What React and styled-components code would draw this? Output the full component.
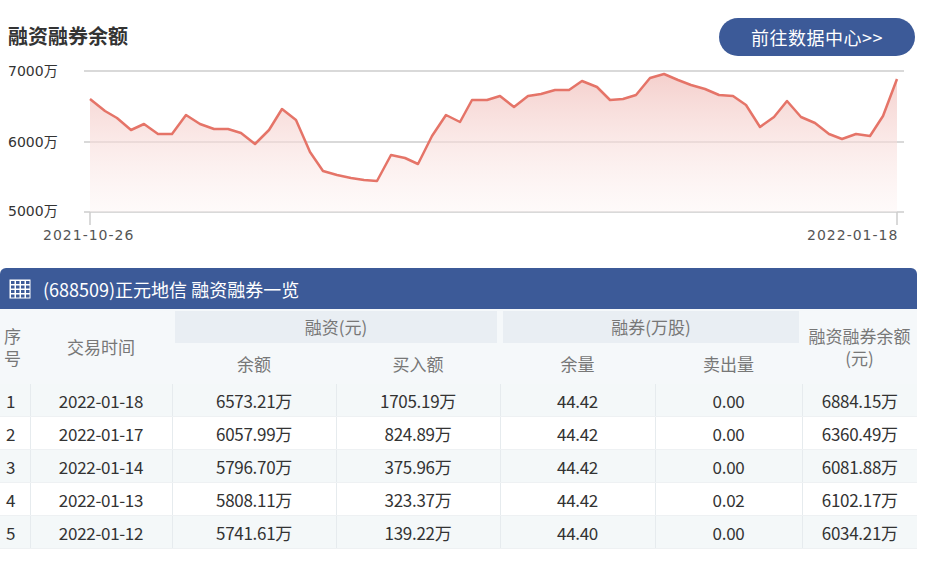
import React from "react";
import styled, { createGlobalStyle } from "styled-components";

const Global = createGlobalStyle`
  body { margin: 0; background: #fff; font-family: "Noto Sans CJK SC", "Noto Sans", sans-serif; }
`;

const Page = styled.div` width: 917px; `;
const TitleRow = styled.div`
  display: flex; justify-content: space-between; align-items: center;
  height: 40px; margin-top: 17px; padding-left: 8px;
`;
const Title = styled.h1` margin: 0 0 4px; font-size: 20px; font-weight: bold; color: #333; `;
const GoButton = styled.a`
  display: flex; align-items: center; justify-content: center;
  width: 196px; height: 38px; border-radius: 19px; background: #3c5a98;
  color: #fff; font-size: 18px; letter-spacing: 0.5px; margin-right: 2px;
`;
const Chart = styled.svg` display: block; `;
const Bar = styled.div`
  margin-top: 6px; height: 41px; background: #3c5a98; color: #fff;
  border-radius: 6px 6px 0 0; display: flex; align-items: center; gap: 12px;
  padding-left: 9px; font-size: 18px;
`;
const Table = styled.table`
  width: 917px; border-collapse: collapse; table-layout: fixed; font-size: 17px;
`;
const Th = styled.th`
  font-weight: normal; color: #777; background: #f5f8fa; height: ${p => p.h || 34}px; padding: 0;
  line-height: 22px; vertical-align: middle; font-size: 17px;
`;
const Band = styled.div`
  background: #e9eef3; height: 32px; margin: 2px 3px 0; display: flex; align-items: center; justify-content: center;
`;
const Tr = styled.tr` background: ${p => (p.odd ? "#f4f8f9" : "#fff")}; `;
const Td = styled.td`
  height: 32px; padding: 0; text-align: center; color: #333; border-left: 1px solid #e6ebee;
  border-bottom: 1px solid #eef1f3; letter-spacing: -0.3px;
  &:first-child { border-left: none; text-align: left; padding-left: 6px; }
`;

const pts = [[90,99],[105,111],[117,118],[131,130],[144,124],[158,134],[172,134],[186,115],[200,124],[214,129],[228,129],[241,133],[255,144],[269,130],[282,109],[296,120],[310,152],[323,171],[337,175],[351,178],[364,180],[377,181],[391,155],[405,158],[418,164],[432,136],[446,115],[460,122],[472,100],[487,100],[500,96],[514,107],[528,96],[541,94],[555,90],[569,90],[582,81],[597,87],[610,100],[623,99],[636,95],[650,78],[664,74],[678,80],[691,85],[705,89],[719,95],[733,96],[746,105],[760,127],[774,117],[787,101],[801,117],[815,123],[829,134],[842,139],[856,134],[870,136],[883,116],[897,79]];
const line = pts.map((p, i) => (i ? "L" : "M") + p[0] + "," + p[1]).join(" ");
const area = line + " L897,212 L90,212 Z";

const rows = [
  ["1","2022-01-18","6573.21万","1705.19万","44.42","0.00","6884.15万"],
  ["2","2022-01-17","6057.99万","824.89万","44.42","0.00","6360.49万"],
  ["3","2022-01-14","5796.70万","375.96万","44.42","0.00","6081.88万"],
  ["4","2022-01-13","5808.11万","323.37万","44.42","0.02","6102.17万"],
  ["5","2022-01-12","5741.61万","139.22万","44.40","0.00","6034.21万"],
];

const TableIcon = () => (
  <svg width="22" height="20" viewBox="0 0 22 20">
    <rect x="0.5" y="0.5" width="21" height="19" fill="#fff" />
    {[0,1,2,3].map(r => [0,1,2,3].map(c => (
      <rect key={r+"-"+c} x={2 + c*5} y={2 + r*4.5} width="3.5" height="3" fill="#3c5a98" />
    )))}
  </svg>
);

export default function App() {
  return (
    <Page>
      <Global />
      <TitleRow>
        <Title>融资融券余额</Title>
        <GoButton>前往数据中心&gt;&gt;</GoButton>
      </TitleRow>
      <Chart width="917" height="205" viewBox="0 57 917 205">
        <defs>
          <linearGradient id="g" x1="0" y1="0" x2="0" y2="1">
            <stop offset="0" stopColor="#f2c4c0" stopOpacity="0.8" />
            <stop offset="1" stopColor="#fdf3f2" stopOpacity="0.4" />
          </linearGradient>
        </defs>
        {[71,142,212].map(y => <line key={y} x1="84" x2="904" y1={y} y2={y} stroke="#ccc" strokeWidth="1.5" />)}
        <line x1="90" x2="90" y1="212" y2="225" stroke="#ccc" strokeWidth="1.5" />
        <line x1="897" x2="897" y1="212" y2="225" stroke="#ccc" strokeWidth="1.5" />
        <path d={area} fill="url(#g)" />
        <path d={line} fill="none" stroke="#e57468" strokeWidth="2.5" strokeLinejoin="round" />
        <g fontSize="14" fill="#333" fontFamily="'DejaVu Sans', 'Noto Sans CJK SC', sans-serif">
          <text x="8" y="76">7000万</text>
          <text x="8" y="147">6000万</text>
          <text x="8" y="216">5000万</text>
          <text x="43" y="240" fill="#555" letterSpacing="1">2021-10-26</text>
          <text x="807" y="240" fill="#555" letterSpacing="1">2022-01-18</text>
        </g>
      </Chart>
      <Bar><TableIcon />(688509)正元地信 融资融券一览</Bar>
      <Table>
        <colgroup>
          {[30,142,164,164,155,147,115].map((w, i) => <col key={i} style={{ width: w }} />)}
        </colgroup>
        <thead>
          <tr>
            <Th rowSpan={2} style={{ textAlign: "left", paddingLeft: 4 }}>序<br />号</Th>
            <Th rowSpan={2}>交易时间</Th>
            <Th colSpan={2}><Band>融资(元)</Band></Th>
            <Th colSpan={2}><Band>融券(万股)</Band></Th>
            <Th rowSpan={2}>融资融券余额<br />(元)</Th>
          </tr>
          <tr>
            <Th h={41}>余额</Th><Th h={41}>买入额</Th><Th h={41}>余量</Th><Th h={41}>卖出量</Th>
          </tr>
        </thead>
        <tbody>
          {rows.map((r, i) => (
            <Tr key={i} odd={i % 2 === 0}>
              {r.map((c, j) => <Td key={j}>{c}</Td>)}
            </Tr>
          ))}
        </tbody>
      </Table>
    </Page>
  );
}
